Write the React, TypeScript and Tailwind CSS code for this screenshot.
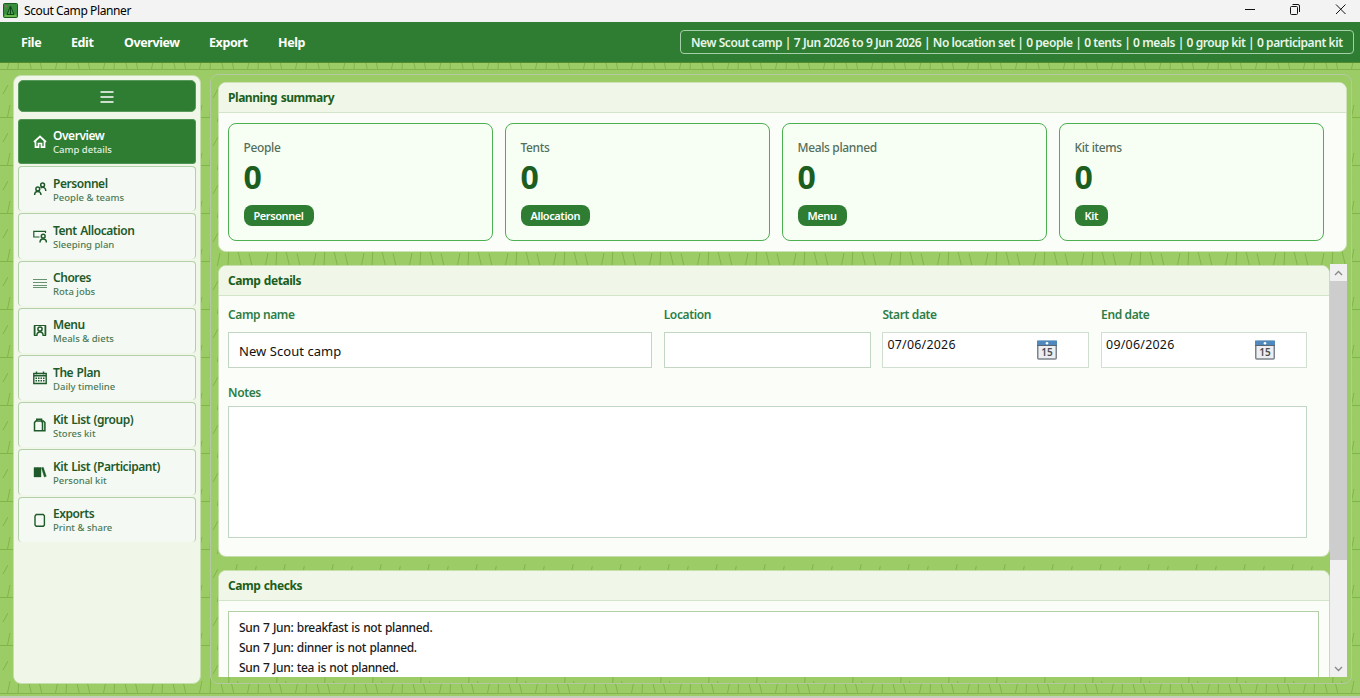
import type { ReactNode } from "react";

const MENUS = [
  { label: "File", cls: "w-[50px]" },
  { label: "Edit", cls: "w-[53px]" },
  { label: "Overview", cls: "w-[85px]" },
  { label: "Export", cls: "w-[69px]" },
  { label: "Help", cls: "w-[50px]" },
];

const NAV: { title: string; sub: string; icon: ReactNode }[] = [
  {
    title: "Overview",
    sub: "Camp details",
    icon: <path d="M1 7 7 1.5 13 7M2.5 6v6.2h3V8.5h3v3.7h3V6" strokeWidth="1.7" />,
  },
  {
    title: "Personnel",
    sub: "People & teams",
    icon: (
      <>
        <circle cx="9.6" cy="3" r="1.9" />
        <path d="M7.6 5.8c3-1.6 5.2.4 5.2 3.2" />
        <circle cx="4.8" cy="7" r="1.9" />
        <path d="M1.6 13c0-4.8 6.4-4.8 6.4 0" />
      </>
    ),
  },
  {
    title: "Tent Allocation",
    sub: "Sleeping plan",
    icon: (
      <>
        <path d="M6.5 8H.8V2.3h11.7V4" strokeWidth="1.2" />
        <circle cx="10.2" cy="7.2" r="1.9" />
        <path d="M7 13.5c0-4.8 6.4-4.8 6.4 0" />
      </>
    ),
  },
  {
    title: "Chores",
    sub: "Rota jobs",
    icon: <path d="M0 2.5h14M0 5.5h14M0 8.5h14M0 10.5h14" strokeWidth="1" opacity="0.65" />,
  },
  {
    title: "Menu",
    sub: "Meals & diets",
    icon: (
      <>
        <path d="M1 1.5h12M1 11.5h3M10 11.5h3" strokeWidth="1.2" />
        <path d="M1.6 1.5v10M12.4 1.5v10" strokeWidth="1.8" />
        <circle cx="7" cy="5" r="2.1" />
        <path d="M3.8 12c0-5.4 6.4-5.4 6.4 0" />
      </>
    ),
  },
  {
    title: "The Plan",
    sub: "Daily timeline",
    icon: (
      <>
        <path d="M.8 2.5h12.4v10H.8zM.8 4.8h12.4M3.5.5v3M10.5.5v3" strokeWidth="1.4" />
        <path d="M2.5 7.2h9M2.5 9.8h9" strokeDasharray="1.5 1" />
      </>
    ),
  },
  {
    title: "Kit List (group)",
    sub: "Stores kit",
    icon: (
      <>
        <path d="M1.5 4.5 2.8 3h5.4l1.3 1.5v8.3h-8zM9.5 12.8h2.4V4.5L10.3 3H8" />
        <path d="M3.8 3V1.2h4.8V3" />
      </>
    ),
  },
  {
    title: "Kit List (Participant)",
    sub: "Personal kit",
    icon: <path d="M1 2.5h3.6v9.4H1zM4.6 2.5h3.4v9.4H4.6zM8.4 2.8l1.9-.5 3 9-2 .8z" fill="currentColor" strokeWidth="0.4" />,
  },
  {
    title: "Exports",
    sub: "Print & share",
    icon: <path d="M2 3.2 3.2 1.5h7l1.2 1.2v9.3l-1 1.3H3.2L2 12z" strokeWidth="1.4" />,
  },
];

const STATS = [
  { label: "People", value: 0, tag: "Personnel" },
  { label: "Tents", value: 0, tag: "Allocation" },
  { label: "Meals planned", value: 0, tag: "Menu" },
  { label: "Kit items", value: 0, tag: "Kit" },
];

const CHECKS = [
  "Sun 7 Jun: breakfast is not planned.",
  "Sun 7 Jun: dinner is not planned.",
  "Sun 7 Jun: tea is not planned.",
];

// 48px repeating grass tile; x/y say where the tile starts inside its box
function Grass({ id, x, y, ground }: { id: string; x: number; y: number; ground?: boolean }) {
  return (
    <svg className="absolute inset-0 h-full w-full" aria-hidden="true">
      <defs>
        <pattern id={id} width="48" height="48" patternUnits="userSpaceOnUse" x={x} y={y}>
          {ground && <path d="M0 47.5h48" stroke="#80b548" strokeWidth="1" />}
          <path
            d="M7.3 48 10 35M18 48l1-21M31.5 48 27.5 31M42 48l-3-12.5M3 24l5-9"
            stroke="#80b548"
            strokeWidth="1"
            fill="none"
          />
        </pattern>
      </defs>
      <rect width="100%" height="100%" fill={`url(#${id})`} />
    </svg>
  );
}

function AppIcon() {
  return (
    <svg width="15" height="15" viewBox="0 0 15 15" className="mb-px ml-[3px]">
      <rect x="0.5" y="0.5" width="14" height="14" rx="1" fill="#388e3c" stroke="#1b5e20" />
      <path d="M1.5 11.5h12V14h-12z" fill="#66bb4a" />
      <path d="M7.5 3 4 11.5h7z" fill="#43a047" stroke="#12491a" />
      <path d="M7.5 3v8.5" stroke="#12491a" />
      <circle cx="3" cy="3.2" r="1.2" fill="#8d6e63" />
    </svg>
  );
}

function TitleBar() {
  return (
    <div className="flex h-[22px] shrink-0 items-center bg-[#f3f3f3]">
      <AppIcon />
      <span className="ml-[6px] text-[12px] leading-none tracking-[-0.4px] text-black">Scout Camp Planner</span>
      <svg className="ml-auto mr-[13px] mt-[-4px]" width="104" height="14" viewBox="0 0 104 14" fill="none" stroke="#111">
        <path d="M2 7.5h10" />
        <path d="M48.5 4.5h5a1 1 0 0 1 1 1v6a1 1 0 0 1-1 1h-5a1 1 0 0 1-1-1v-6a1 1 0 0 1 1-1zM49.5 2.5H55a1.5 1.5 0 0 1 1.5 1.5v6" />
        <path d="m93 2.5 9.5 9.5m0-9.5L93 12" />
      </svg>
    </div>
  );
}

function MenuBar() {
  return (
    <div className="flex h-10 shrink-0 items-center bg-[#2e7d32] pl-[21px] pr-[6px] shadow-[0_1px_0_#558b2f]">
      <nav className="flex pt-[2px] text-[12.5px] font-bold text-white">
        {MENUS.map((m) => (
          <span key={m.label} className={`${m.cls} tracking-[-0.4px]`}>
            {m.label}
          </span>
        ))}
      </nav>
      <div className="ml-auto flex h-6 w-[674px] items-center whitespace-nowrap rounded-[4px] border border-[#a5cfa7] pl-[10px] pt-[2px] text-[12px] font-semibold tracking-[-0.425px] text-[#e8f5e9]">
        New Scout camp | 7 Jun 2026 to 9 Jun 2026 | No location set | 0 people | 0 tents | 0 meals | 0 group kit | 0 participant kit
      </div>
    </div>
  );
}

function Sidebar() {
  return (
    <aside className="mt-[13px] flex h-[609px] w-[188px] shrink-0 flex-col rounded-[8px] border border-[#c5deac] bg-[#f0f6e8] px-[4px] pt-[4px]">
      <button className="flex h-8 shrink-0 items-center justify-center rounded-[5px] border border-[#589a5b] bg-[#2e7d32]" aria-label="Toggle menu">
        <svg className="mt-[2px]" width="14" height="12" viewBox="0 0 14 12" stroke="#fff" strokeWidth="1.4">
          <path d="M.5 1h13M.5 6h13M.5 11h13" />
        </svg>
      </button>
      <div className="mt-[7px] flex flex-col gap-[2px]">
        {NAV.map((item, i) => (
          <div
            key={item.title}
            className={
              i === 0
                ? "flex h-[45.2px] items-center rounded-[3px] border border-[#4f9553] bg-[#2e7d32] pl-[14px] text-white"
                : "flex h-[45.2px] items-center rounded-[4px] border border-b-0 border-[#b3d0a8] bg-[#f4f9f3] pl-[14px] text-[#1f5a2a]"
            }
          >
            <svg
              width="14"
              height="14"
              viewBox="0 0 14 14"
              fill="none"
              stroke="currentColor"
              strokeWidth="1.5"
              className="shrink-0"
            >
              {item.icon}
            </svg>
            <div className="ml-[6px] whitespace-nowrap pt-[2px]">
              <div className="text-[12px] font-semibold leading-[15px] tracking-[-0.45px] [word-spacing:0.8px]">{item.title}</div>
              <div className={i === 0 ? "text-[9.5px] font-medium leading-[14px] text-[#e0f0e1]" : "text-[9.5px] font-medium leading-[14px] text-[#4d7a56]"}>
                {item.sub}
              </div>
            </div>
          </div>
        ))}
      </div>
    </aside>
  );
}

function CardHeader({ title }: { title: string }) {
  return (
    <h2 className="flex h-[30px] shrink-0 items-center border-b border-[#d3e5c8] bg-[#f0f6e8] pl-[9px] pt-px text-[12px] font-bold tracking-[-0.45px] text-[#1b5e20] [word-spacing:0.8px]">
      {title}
    </h2>
  );
}

function Summary() {
  return (
    <section className="h-[170px] shrink-0 overflow-hidden rounded-[8px] border border-[#cfe3bb] bg-[#fafdf8]">
      <CardHeader title="Planning summary" />
      <div className="flex gap-3 pl-[9px] pt-[10px]">
        {STATS.map((s) => (
          <div key={s.label} className="flex h-[118px] w-[265px] flex-col items-start rounded-[8px] border border-[#4caf50] bg-[#f7fff5] pl-[14.5px] pt-[16px]">
            <div className="text-[12px] font-medium leading-4 tracking-[-0.35px] text-[#546e5a]">{s.label}</div>
            <div className="mt-[3px] text-[32px] font-bold leading-[36px] text-[#1b5e20]">{s.value}</div>
            <div className="mt-[10px] flex h-[21px] items-center rounded-[8px] bg-[#2e7d32] px-[10px] pt-px text-[11px] font-semibold tracking-[-0.42px] text-white">
              {s.tag}
            </div>
          </div>
        ))}
      </div>
    </section>
  );
}

function CalendarIcon() {
  return (
    <svg width="20" height="20" viewBox="0 0 20 20">
      <rect x="0.75" y="1.5" width="18.5" height="17.5" rx="1" fill="#eceef1" stroke="#7d838c" strokeWidth="1.5" />
      <rect x="0" y="0.5" width="20" height="5" fill="#4f88bd" />
      <path d="M0 5.5h20" stroke="#5b6570" />
      <circle cx="10" cy="3.3" r="1.3" fill="#fff" />
      <text x="10" y="16" textAnchor="middle" fontSize="10" fontWeight="600" fill="#4a4d52" fontFamily="Noto Sans, sans-serif">
        15
      </text>
    </svg>
  );
}

function Label({ children }: { children: ReactNode }) {
  return <div className="text-[12px] font-semibold leading-4 tracking-[-0.38px] text-[#2e7d46]">{children}</div>;
}

function DateField({ label, value }: { label: string; value: string }) {
  return (
    <div>
      <Label>{label}</Label>
      <div className="mt-[9px] flex h-9 justify-between border border-[#d0dfd0] bg-white pl-[4px] pr-[31px] pt-[4px]">
        <span className="text-[12.4px] leading-4 tracking-[0.25px] text-[#111]">{value}</span>
        <span className="mt-[3px]">
          <CalendarIcon />
        </span>
      </div>
    </div>
  );
}

function CampDetails() {
  return (
    <section className="h-[292px] shrink-0 overflow-hidden rounded-[8px] border border-[#c5deac] bg-[#fafdf8]">
      <CardHeader title="Camp details" />
      <div className="px-[9px] pt-[11px]">
        <div className="grid grid-cols-[424px_207px_207px_206px] gap-x-[11.7px]">
          <div>
            <Label>Camp name</Label>
            <div className="mt-[9px] flex h-9 items-center border border-[#c2d6c4] bg-white pl-[10px] pt-[3px] text-[13px] tracking-[0.05px] text-[#111]">
              New Scout camp
            </div>
          </div>
          <div>
            <Label>Location</Label>
            <div className="mt-[9px] h-9 border border-[#c2d6c4] bg-white" />
          </div>
          <DateField label="Start date" value="07/06/2026" />
          <DateField label="End date" value="09/06/2026" />
        </div>
        <div className="mt-[17px]">
          <Label>Notes</Label>
          <div className="mt-[5px] h-[132px] w-[1079px] border border-[#c2d6c4] bg-white" />
        </div>
      </div>
    </section>
  );
}

function CampChecks() {
  return (
    <section className="h-[108px] shrink-0 overflow-hidden rounded-t-[8px] border border-b-0 border-[#c5deac] bg-[#fafdf8]">
      <CardHeader title="Camp checks" />
      <ul className="ml-[9px] mr-[10px] mt-[10px] h-20 border border-[#b3cfa5] bg-white pl-[10px] pt-[6px]">
        {CHECKS.map((c) => (
          <li key={c} className="text-[12px] font-medium leading-5 tracking-[-0.36px] text-[#1a1a1a] [word-spacing:0.7px]">
            {c}
          </li>
        ))}
      </ul>
    </section>
  );
}

function ScrollBar() {
  return (
    <div className="flex h-[413px] w-[17px] shrink-0 flex-col bg-[#f0f0f0]">
      <svg width="17" height="17" viewBox="0 0 17 17" fill="none" stroke="#8a8a8a" strokeWidth="1.4">
        <path d="m5 11 3.5-3.5L12 11" />
      </svg>
      <div className="h-[279px] bg-[#cdcdcd]" />
      <svg className="mt-auto" width="17" height="17" viewBox="0 0 17 17" fill="none" stroke="#8a8a8a" strokeWidth="1.4">
        <path d="m5 7 3.5 3.5L12 7" />
      </svg>
    </div>
  );
}

export default function App() {
  return (
    <div className="flex h-[698px] w-[1360px] flex-col overflow-hidden bg-[#9ccc65] font-['Noto_Sans','Open_Sans',sans-serif]">
      <TitleBar />
      <div className="relative z-10">
        <MenuBar />
      </div>
      <div className="relative flex-1 border-b-2 border-[#c4ccbc]">
        <Grass id="grass-outer" x={0} y={8} ground />
        <div className="relative flex pl-[13px]">
          <Sidebar />
          <main className="relative ml-[9px] mt-3 h-[610px] w-[1142px] overflow-hidden rounded-[8px] border border-[#b4c9a3] bg-[#9ccc65]">
            <Grass id="grass-inner" x={-1} y={-1} />
            <div className="relative flex flex-col pl-[7px] pr-[4px] pt-[7px]">
              <Summary />
              <div className="mt-[12px] flex">
                <div className="flex h-[413px] w-[1112px] flex-col overflow-hidden pt-px">
                  <CampDetails />
                  <div className="h-[13px] shrink-0 bg-[#9ccc65]">
                    <svg width="1112" height="13">
                      <defs>
                        <pattern id="tufts" width="48" height="13" patternUnits="userSpaceOnUse">
                          <path d="m18 13 1.2-6M37.5 13l.8-4" stroke="#80b548" />
                        </pattern>
                      </defs>
                      <rect width="1112" height="13" fill="url(#tufts)" />
                    </svg>
                  </div>
                  <CampChecks />
                </div>
                <ScrollBar />
              </div>
            </div>
          </main>
        </div>
      </div>
    </div>
  );
}
